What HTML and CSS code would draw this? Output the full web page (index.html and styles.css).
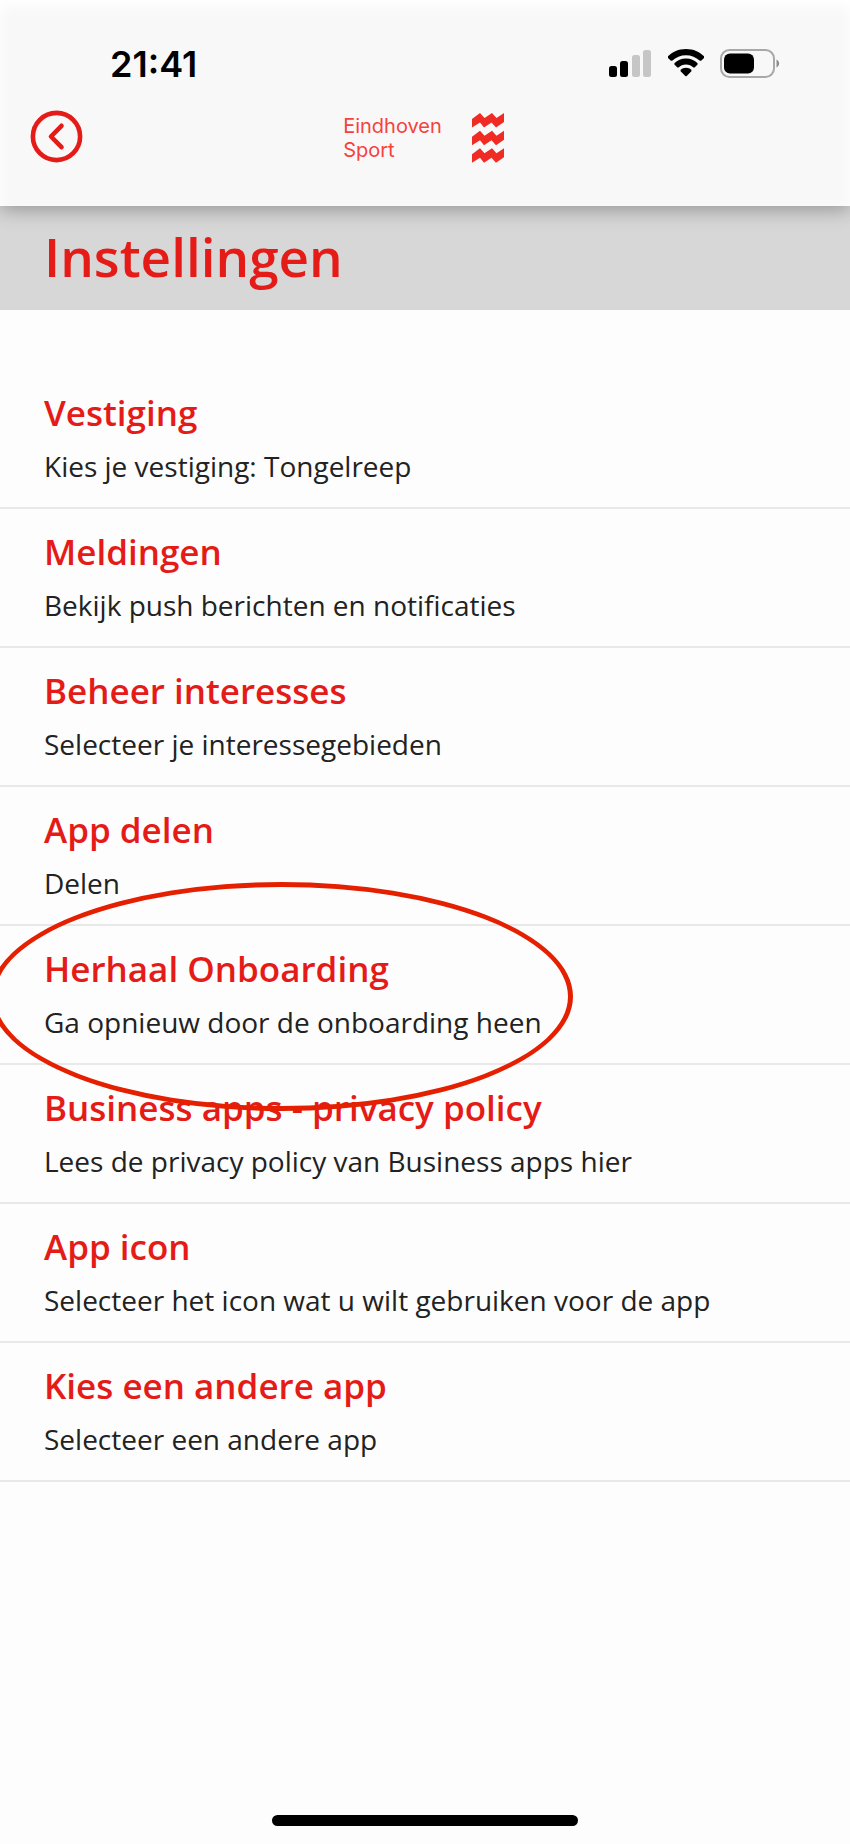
FILE: index.html
```html
<!DOCTYPE html>
<html lang="nl">
<head>
<meta charset="utf-8">
<meta name="viewport" content="width=device-width, initial-scale=1">
<title>Instellingen</title>
<link rel="stylesheet" href="styles.css">
</head>
<body>
<div class="app">
  <header class="header">
    <div class="status">
      <time class="clock">21:41</time>
      <div class="indicators">
        <svg width="44" height="30" viewBox="0 0 44 30" aria-hidden="true">
          <rect x="1" y="17" width="8" height="11" rx="2.5"/>
          <rect x="12" y="12" width="8" height="16" rx="2.5"/>
          <rect x="24" y="6" width="8" height="22" rx="2.5" fill="#c6c6c6"/>
          <rect x="35" y="1" width="8" height="27" rx="2.5" fill="#c6c6c6"/>
        </svg>
        <svg width="36" height="30" viewBox="0 0 36 30" aria-hidden="true">
          <path d="M18 0C10.500 0 4.500 2.800 0 7.300v1.600l2.900 2.900h1.200C8 8.200 12.700 6.200 18 6.200s10 2 13.900 5.600h1.200L36 8.900V7.300C31.500 2.800 25.500 0 18 0z"/>
          <path d="M18 9.600c-4.600 0-8.600 1.700-11.600 4.600v1.400l3 3h1.200c2-1.900 4.500-3 7.400-3s5.400 1.100 7.400 3h1.200l3-3v-1.400c-3-2.900-7-4.600-11.600-4.600z"/>
          <path d="M18 18.800c-2.200 0-4 .8-5.400 2v1.400l4.700 4.700c.5.500.9.500 1.400 0l4.700-4.700v-1.400c-1.400-1.200-3.200-2-5.400-2z"/>
        </svg>
        <svg width="60" height="30" viewBox="0 0 60 30" aria-hidden="true">
          <rect x="1" y="1" width="53" height="27" rx="8.500" fill="none" stroke="#a8a8a8" stroke-width="2"/>
          <rect x="4" y="4.500" width="30" height="20" rx="6"/>
          <path d="M56.500 10.500c3.500 1.500 3.500 6.500 0 8z" fill="#8c8c8c"/>
        </svg>
      </div>
    </div>
    <nav class="nav">
      <button class="back" type="button" aria-label="Terug">
        <svg width="53" height="53" viewBox="0 0 53 53" fill="none" stroke="currentColor" aria-hidden="true">
          <circle cx="26.500" cy="26.500" r="23.600" stroke-width="4.600"/>
          <path d="M31.500 15.800 21 26.500l10.500 10.700" stroke-width="4.600" stroke-linecap="round" stroke-linejoin="round"/>
        </svg>
      </button>
      <div class="brand">
        <span class="brand-name">Eindhoven<br>Sport</span>
        <svg width="32" height="50" viewBox="0 0 32 50" fill="#ef2b24" aria-hidden="true">
          <path id="wave" d="M0 6 8 0l4.500 5L20 0l4.500 5L32 0v9l-8 5.500-4.500-5-7.500 5-4-5-8 5z"/>
          <use href="#wave" y="17.700"/>
          <use href="#wave" y="35.300"/>
        </svg>
      </div>
    </nav>
  </header>
  <main class="main">
    <h1 class="title">Instellingen</h1>
    <ul class="list">
      <li class="item"><a class="link" href="#vestiging"><span class="name">Vestiging</span><span class="info">Kies je vestiging: Tongelreep</span></a></li>
      <li class="item"><a class="link" href="#meldingen"><span class="name">Meldingen</span><span class="info">Bekijk push berichten en notificaties</span></a></li>
      <li class="item"><a class="link" href="#interesses"><span class="name">Beheer interesses</span><span class="info">Selecteer je interessegebieden</span></a></li>
      <li class="item"><a class="link" href="#delen"><span class="name">App delen</span><span class="info">Delen</span></a></li>
      <li class="item item-marked"><a class="link" href="#onboarding"><span class="name">Herhaal Onboarding</span><span class="info">Ga opnieuw door de onboarding heen</span></a></li>
      <li class="item"><a class="link" href="#privacy"><span class="name">Business apps - privacy policy</span><span class="info">Lees de privacy policy van Business apps hier</span></a></li>
      <li class="item"><a class="link" href="#icon"><span class="name">App icon</span><span class="info">Selecteer het icon wat u wilt gebruiken voor de app</span></a></li>
      <li class="item"><a class="link" href="#andere-app"><span class="name">Kies een andere app</span><span class="info">Selecteer een andere app</span></a></li>
    </ul>
  </main>
  <footer class="footer"><div class="home-bar"></div></footer>
</div>
</body>
</html>
```
FILE: styles.css
```css
*, *::after { box-sizing: border-box; }

body {
  margin: 0;
  background: #fdfdfd;
  color: #222;
  font-family: "Open Sans", "Noto Sans", sans-serif;
}

.app {
  display: flex;
  flex-direction: column;
  min-height: 100vh;
  overflow: hidden;
}

.header {
  position: relative;
  z-index: 1;
  padding: 44px 30px 43px;
  background: #f8f8f8;
  box-shadow: inset 0 6px 14px #fff, 0 4px 18px rgba(0, 0, 0, 0.3);
}

.status {
  display: flex;
  justify-content: space-between;
  align-items: center;
  height: 40px;
  padding: 0 40px 0 80px;
}

.clock {
  color: #000;
  font: 600 36px/40px Inter, "Liberation Sans", sans-serif;
}

.indicators {
  display: flex;
  gap: 16px;
}

.nav {
  display: grid;
  grid-template-columns: 1fr auto 1fr;
  align-items: center;
  margin-top: 26px;
}

.back {
  justify-self: start;
  display: flex;
  padding: 0;
  border: 0;
  background: none;
  color: #e51b18;
}

.brand {
  display: flex;
  align-items: center;
  gap: 30px;
  padding: 3px 3px 0 0;
}

.brand-name {
  color: #f5433c;
  font: 400 20px/24px Inter, "Liberation Sans", sans-serif;
}

.main { flex: 1; }

.title {
  margin: 0;
  padding: 19px 44px 21px;
  background: #d7d7d7;
  color: #e51b18;
  font-size: 53px;
  font-weight: 600;
  line-height: 64px;
}

.list {
  margin: 0;
  padding: 60px 0 0;
  list-style: none;
}

.item {
  position: relative;
  border-bottom: 2px solid #e8e8e8;
}

.link {
  display: flex;
  flex-direction: column;
  gap: 10px;
  padding: 20px 44px 21px;
  color: inherit;
  text-decoration: none;
}

.name {
  color: #e51b18;
  font-size: 35px;
  font-weight: 600;
  line-height: 46px;
}

.info {
  font-size: 28px;
  line-height: 40px;
}

.item-marked::after {
  content: "";
  position: absolute;
  z-index: 1;
  top: -44px;
  left: -10px;
  width: 583px;
  height: 229px;
  border: 5px solid #e42000;
  border-radius: 50%;
  pointer-events: none;
}

.footer {
  display: flex;
  justify-content: center;
  padding-bottom: 18px;
}

.home-bar {
  width: 36%;
  height: 11px;
  border-radius: 6px;
  background: #000;
}
```
